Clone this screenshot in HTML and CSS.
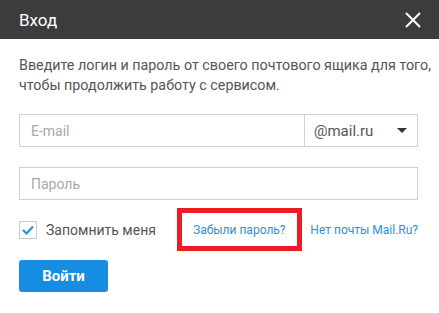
FILE: index.html
```html
<!DOCTYPE html>
<html lang="ru">
<head>
<meta charset="utf-8">
<link rel="stylesheet" href="styles.css">
</head>
<body>
<div class="dialog">
  <div class="header">
    <span class="title">Вход</span>
    <svg class="close" width="16" height="16" viewBox="0 0 16 16"><path d="M1 1L15 15M15 1L1 15" stroke="#fff" stroke-width="2" fill="none"/></svg>
  </div>
  <div class="body">
    <p class="desc">Введите логин и пароль от своего почтового ящика для того,<br>чтобы продолжить работу с сервисом.</p>
    <div class="field email">
      <span class="ph">E-mail</span>
      <div class="domain"><span>@mail.ru</span><span class="arrow"></span></div>
    </div>
    <div class="field pass"><span class="ph">Пароль</span></div>
    <div class="row">
      <label class="remember">
        <span class="check"><svg width="12" height="10" viewBox="0 0 12 10"><path d="M1 5L4.5 8.5L11 1.5" stroke="#1a8fe3" stroke-width="2" fill="none"/></svg></span>
        <span>Запомнить меня</span>
      </label>
      <span class="forgot"><a>Забыли пароль?</a></span>
      <a class="nomail">Нет почты Mail.Ru?</a>
    </div>
    <button class="btn">Войти</button>
  </div>
</div>
</body>
</html>
```

FILE: styles.css
```css
html, body { margin: 0; padding: 0; background: #fff; }
body { width: 439px; height: 313px; overflow: hidden; font-family: Roboto, "Noto Sans", sans-serif; }
.dialog { width: 439px; }
.header { height: 39px; background: #3c3c3c; display: flex; align-items: center; justify-content: space-between; padding: 0 18px 0 19px; box-sizing: border-box; }
.title { color: #fff; font-size: 17px; }
.close { display: block; }
.body { padding: 16px 21px 0 19px; }
.desc { margin: 0; font-size: 14.3px; line-height: 20px; color: #555; white-space: nowrap; }
.field { border: 1px solid #d0d0d0; height: 33px; box-sizing: border-box; display: flex; align-items: center; font-size: 14px; }
.email { margin-top: 19px; }
.pass { margin-top: 20px; }
.ph { color: #a8a8a8; padding-left: 11px; flex: 1; }
.domain { width: 113px; height: 100%; border-left: 1px solid #d0d0d0; display: flex; align-items: center; justify-content: space-between; padding: 0 10px 0 9px; box-sizing: border-box; color: #555; font-size: 15px; }
.arrow { width: 0; height: 0; border-left: 5px solid transparent; border-right: 5px solid transparent; border-top: 5px solid #333; }
.row { display: flex; align-items: center; margin-top: 8px; white-space: nowrap; }
.row > * { flex-shrink: 0; }
.remember { display: flex; align-items: center; color: #555; width: 158px; font-size: 14px; }
.check { width: 18px; height: 18px; box-sizing: border-box; border: 1px solid #ccc; display: flex; align-items: center; justify-content: center; margin-right: 9px; }
.forgot { border: 5px solid #ed1c24; padding: 0 11px; height: 43px; box-sizing: border-box; display: flex; align-items: center; font-size: 12px; color: #2a8fe0; }
.nomail { margin-left: auto; font-size: 12px; color: #2a8fe0; }
.btn { margin-top: 9px; width: 89px; height: 32px; border: none; border-radius: 3px; background: #168de2; color: #fff; font-family: inherit; font-size: 15px; font-weight: bold; padding: 0; display: block; }
```
